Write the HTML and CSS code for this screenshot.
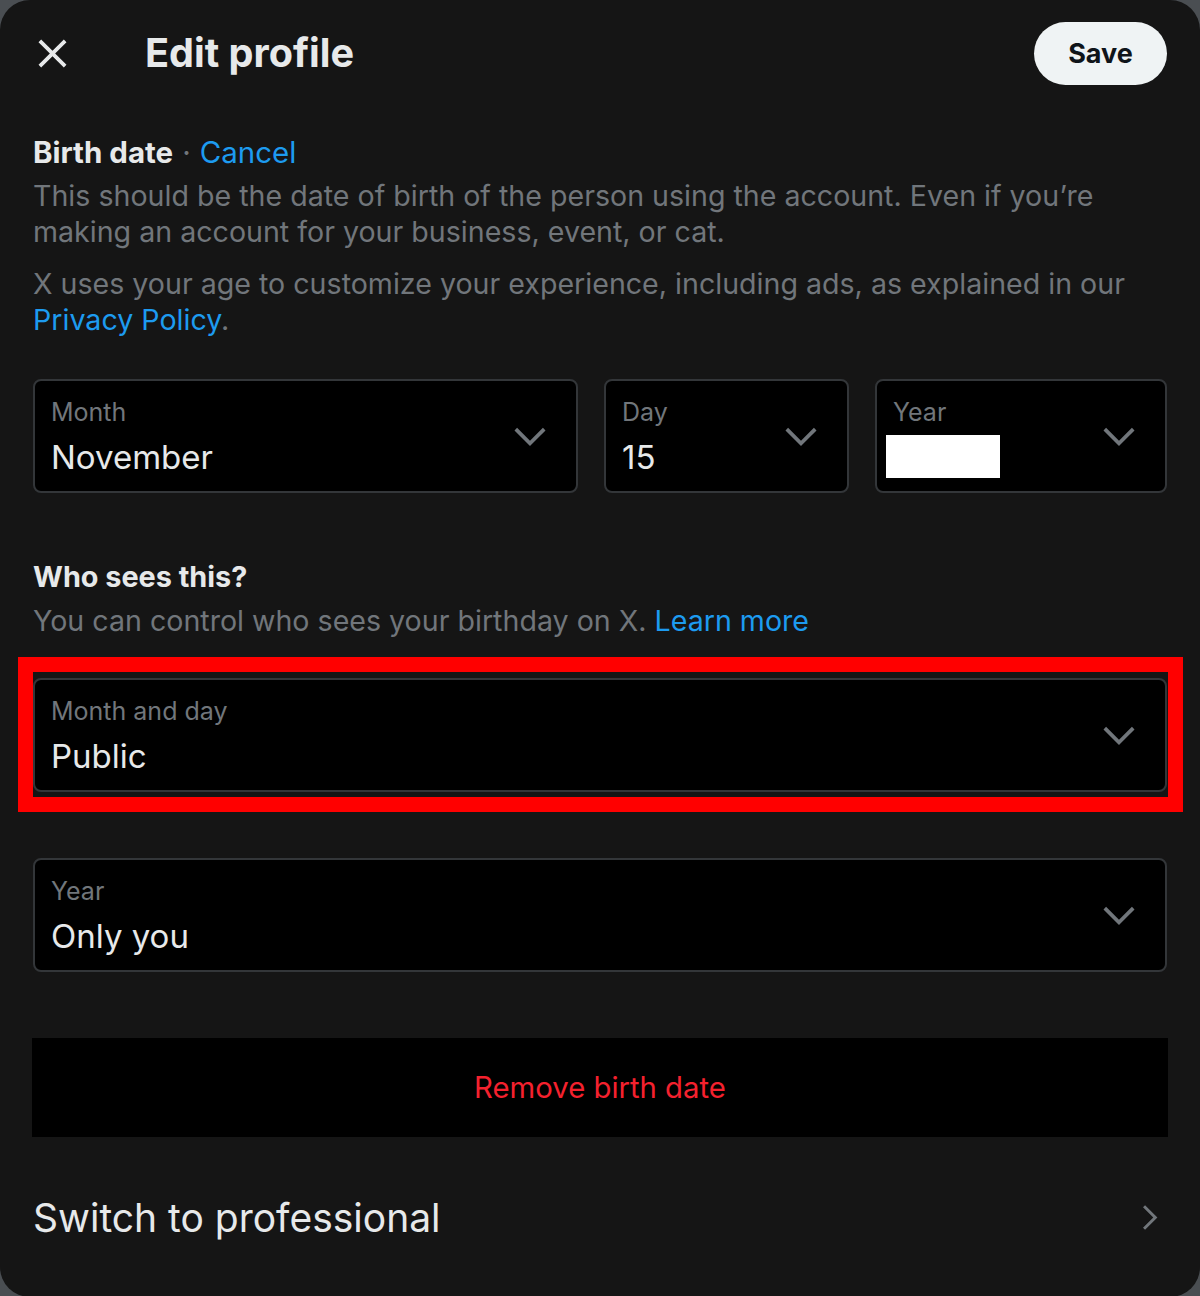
FILE: index.html
```html
<!DOCTYPE html>
<html lang="en">
<head>
    <meta charset="UTF-8" />
    <meta name="viewport" content="width=device-width, initial-scale=1.0"/>
    <title>Edit profile</title>
    <link rel="stylesheet" href="styles.css">
</head>
<body>

<div class="modal">
    <header class="modal-header">
        <button class="close-btn" aria-label="Close">
            <svg viewBox="0 0 24 24"><path d="M10.59 12L4.54 5.96l1.42-1.42L12 10.59l6.04-6.05 1.42 1.42L13.41 12l6.05 6.04-1.42 1.42L12 13.41l-6.04 6.05-1.42-1.42L10.59 12z"/></svg>
        </button>
        <h1>Edit profile</h1>
        <button class="save-btn">Save</button>
    </header>

    <section class="content">
        <div class="section-title">Birth date <span class="dot">·</span> <a href="#" class="link">Cancel</a></div>
        <p class="muted">This should be the date of birth of the person using the account. Even if you’re making an account for your business, event, or cat.</p>
        <p class="muted spaced">X uses your age to customize your experience, including ads, as explained in our <a href="#" class="link">Privacy Policy</a>.</p>

        <div class="date-row">
            <div class="field month">
                <div class="field-text">
                    <div class="field-label">Month</div>
                    <div class="field-value">November</div>
                </div>
                <svg class="chevron" viewBox="0 0 24 24"><path d="M3.543 8.96l1.414-1.42L12 14.59l7.043-7.05 1.414 1.42L12 17.41 3.543 8.96z"/></svg>
            </div>
            <div class="field day">
                <div class="field-text">
                    <div class="field-label">Day</div>
                    <div class="field-value">15</div>
                </div>
                <svg class="chevron" viewBox="0 0 24 24"><path d="M3.543 8.96l1.414-1.42L12 14.59l7.043-7.05 1.414 1.42L12 17.41 3.543 8.96z"/></svg>
            </div>
            <div class="field year">
                <div class="field-text">
                    <div class="field-label">Year</div>
                    <div class="field-value"><span class="redacted"></span></div>
                </div>
                <svg class="chevron" viewBox="0 0 24 24"><path d="M3.543 8.96l1.414-1.42L12 14.59l7.043-7.05 1.414 1.42L12 17.41 3.543 8.96z"/></svg>
            </div>
        </div>

        <div class="section-title who">Who sees this?</div>
        <p class="muted">You can control who sees your birthday on X. <a href="#" class="link">Learn more</a></p>

        <div class="highlight">
            <div class="field">
                <div class="field-text">
                    <div class="field-label">Month and day</div>
                    <div class="field-value">Public</div>
                </div>
                <svg class="chevron" viewBox="0 0 24 24"><path d="M3.543 8.96l1.414-1.42L12 14.59l7.043-7.05 1.414 1.42L12 17.41 3.543 8.96z"/></svg>
            </div>
        </div>

        <div class="field year-visibility">
            <div class="field-text">
                <div class="field-label">Year</div>
                <div class="field-value">Only you</div>
            </div>
            <svg class="chevron" viewBox="0 0 24 24"><path d="M3.543 8.96l1.414-1.42L12 14.59l7.043-7.05 1.414 1.42L12 17.41 3.543 8.96z"/></svg>
        </div>

        <button class="remove-btn">Remove birth date</button>

        <div class="pro-row">
            <span>Switch to professional</span>
            <svg class="chevron-right" viewBox="0 0 24 24"><path d="M14.586 12L7.543 4.96l1.414-1.42L17.414 12l-8.457 8.46-1.414-1.42L14.586 12z"/></svg>
        </div>
    </section>
</div>

</body>
</html>
```

FILE: styles.css
```css
body {
    margin: 0;
    background: #4a4e52;
    font-family: Inter, Roboto, "Noto Sans", Arial, sans-serif;
    color: #e7e9ea;
}

.modal {
    background: #151515;
    min-height: 1296px;
    border-radius: 30px;
    overflow: hidden;
}

/* Header */
.modal-header {
    display: flex;
    align-items: center;
    height: 106px;
    padding: 0 33px 0 30px;
}
.close-btn {
    background: none;
    border: none;
    padding: 0;
    width: 45px;
    height: 45px;
    cursor: pointer;
}
.close-btn svg {
    width: 45px;
    height: 45px;
    fill: #e7e9ea;
}
.modal-header h1 {
    flex: 1;
    margin: 0 0 0 70px;
    font-size: 39.6px;
    font-weight: 700;
}
.save-btn {
    background: #eff3f4;
    color: #0f1419;
    border: none;
    border-radius: 32px;
    height: 63px;
    width: 133px;
    font-family: inherit;
    font-size: 27px;
    font-weight: 700;
    cursor: pointer;
}

/* Content */
.content {
    padding: 28px 33px 0;
}
.section-title {
    font-size: 29.5px;
    line-height: 36px;
    font-weight: 700;
}
.section-title .dot {
    color: #71767b;
    font-weight: 400;
    margin: 0 2px;
}
.link {
    color: #1d9bf0;
    text-decoration: none;
    font-weight: 400;
}
.muted {
    margin: 8px 0 0;
    font-size: 28.6px;
    line-height: 36px;
    color: #71767b;
}
.muted.spaced {
    margin-top: 16px;
}

/* Select fields */
.date-row {
    display: flex;
    gap: 26px;
    margin-top: 41px;
}
.field {
    display: flex;
    align-items: center;
    box-sizing: border-box;
    height: 114px;
    padding: 0 24px 0 16px;
    background: #000;
    border: 2px solid #333639;
    border-radius: 8px;
}
.field-text {
    flex: 1;
    align-self: flex-start;
    padding-top: 14px;
}
.field-label {
    font-size: 25px;
    line-height: 34px;
    color: #71767b;
}
.field-value {
    margin-top: 6px;
    font-size: 33px;
    line-height: 44px;
    color: #e7e9ea;
}
.chevron {
    width: 44px;
    height: 44px;
    fill: #71767b;
}
.month { width: 545px; }
.day { width: 245px; }
.year { flex: 1; }
.redacted {
    display: block;
    width: 114px;
    height: 43px;
    margin-left: -7px;
    background: #fff;
}

.who {
    margin-top: 66px;
    font-size: 28.8px;
}

.highlight {
    margin: 18px -16px 0 -15px;
    padding: 6px 1px 5px 0;
    border: 15px solid #ff0000;
}

.year-visibility {
    margin-top: 46px;
}

.remove-btn {
    display: block;
    width: calc(100% + 2px);
    margin: 66px -1px 0;
    height: 99px;
    background: #000;
    border: none;
    color: #f4212e;
    font-family: inherit;
    font-size: 29.3px;
    cursor: pointer;
}

.pro-row {
    display: flex;
    align-items: center;
    justify-content: space-between;
    height: 160px;
    font-size: 39px;
    color: #e7e9ea;
}
.chevron-right {
    width: 35px;
    height: 35px;
    fill: #71767b;
}
```
